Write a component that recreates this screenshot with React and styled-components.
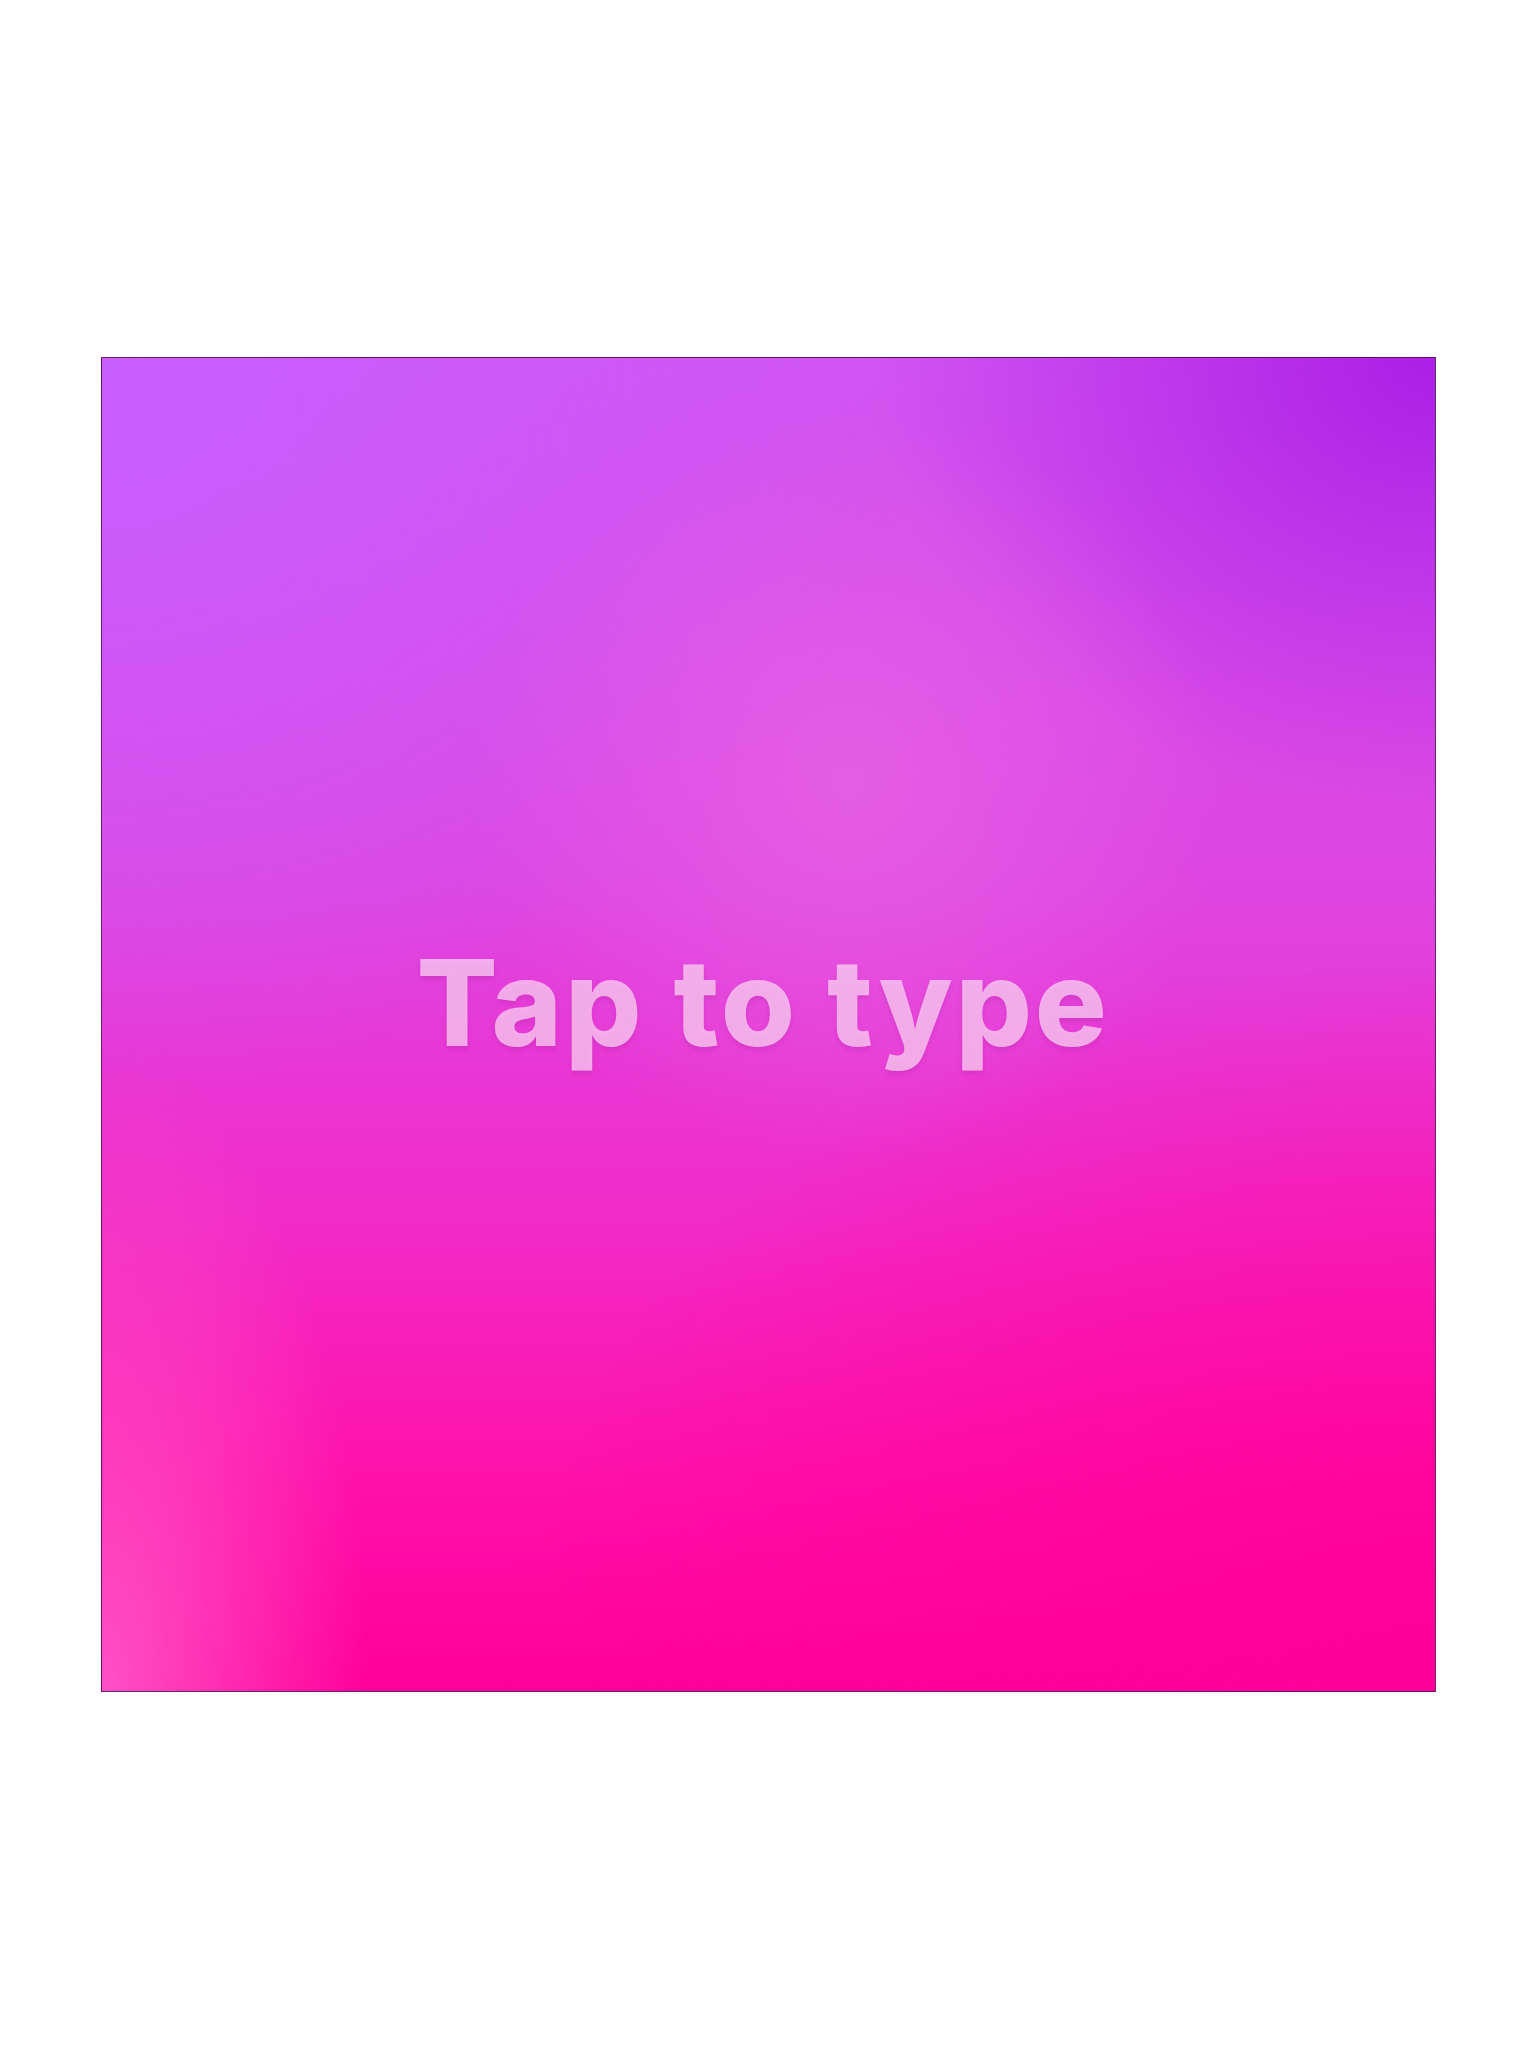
import React from "react";
import styled, { createGlobalStyle } from "styled-components";

const Global = createGlobalStyle`
  html, body { margin: 0; padding: 0; background: #ffffff; }
  body { font-family: Inter, "Noto Sans", sans-serif; }
`;

const Page = styled.div`
  width: 1536px;
  height: 2048px;
  display: flex;
  align-items: center;
  justify-content: center;
  background: #ffffff;
`;

const Canvas = styled.div`
  width: 1335px;
  height: 1335px;
  box-sizing: border-box;
  border: 1px solid rgba(60, 20, 70, 0.75);
  display: flex;
  align-items: center;
  justify-content: center;
  padding-bottom: 42px;
  padding-right: 10px;
  background:
    radial-gradient(circle at 56% 32%, rgba(232, 100, 228, 0.75) 0%, rgba(232, 100, 228, 0) 32%),
    radial-gradient(ellipse 20% 48% at 0% 100%, rgba(255, 85, 200, 0.95) 0%, rgba(255, 85, 200, 0) 100%),
    radial-gradient(ellipse 42% 34% at 100% 0%, #ac1ee6 0%, rgba(172, 30, 230, 0) 100%),
    radial-gradient(ellipse 60% 55% at 0% 0%, #c95eff 0%, rgba(201, 94, 255, 0) 100%),
    radial-gradient(ellipse 70% 55% at 100% 100%, #ff0099 0%, rgba(255, 0, 153, 0) 100%),
    linear-gradient(to bottom, #d055f2 0%, #de45e0 40%, #f22ac8 65%, #ff10a8 85%, #ff0099 100%);
`;

const Prompt = styled.div`
  font-family: Inter, "Noto Sans", sans-serif;
  font-weight: 800;
  font-size: 120px;
  letter-spacing: 2.8px;
  line-height: 1;
  color: rgba(255, 225, 248, 0.68);
  text-shadow: 0 3px 4px rgba(140, 20, 120, 0.18);
  white-space: nowrap;
  user-select: none;
`;

export default function App() {
  return (
    <>
      <Global />
      <Page>
        <Canvas>
          <Prompt>Tap to type</Prompt>
        </Canvas>
      </Page>
    </>
  );
}
